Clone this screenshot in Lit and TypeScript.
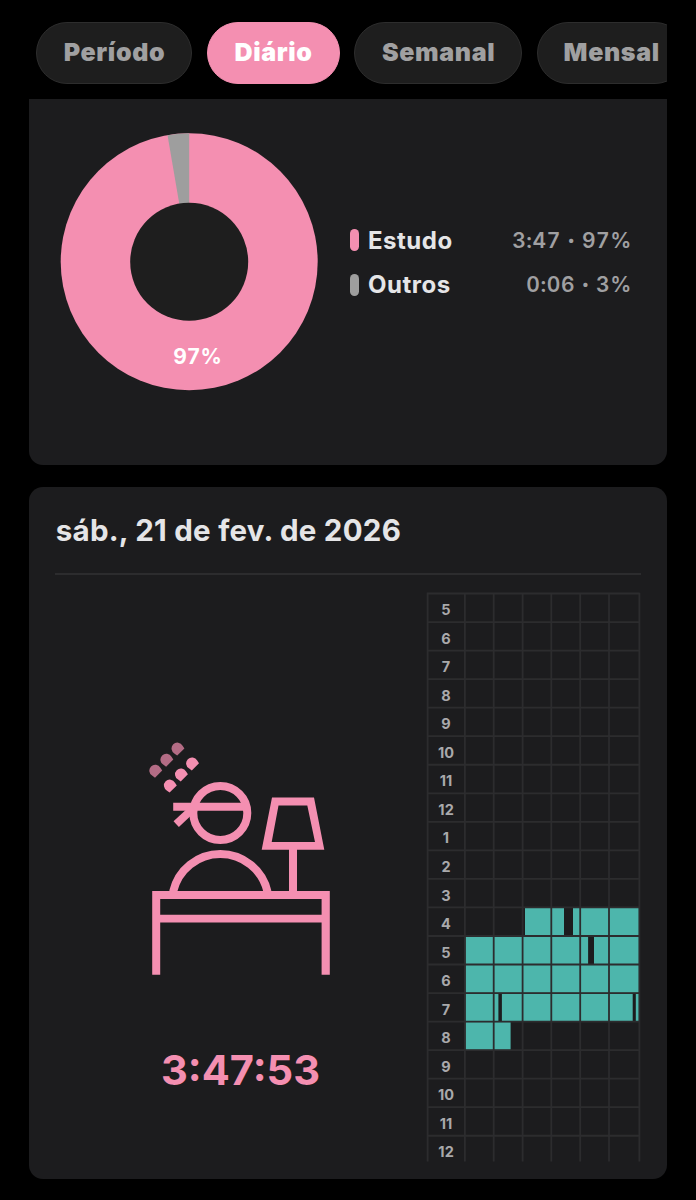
import { LitElement, html, svg, css } from "lit";
import { customElement, property } from "lit/decorators.js";

const HOURS = [5, 6, 7, 8, 9, 10, 11, 12, 1, 2, 3, 4, 5, 6, 7, 8, 9, 10, 11, 12];
const COLS = [38.9, 67.7, 96.6, 125.3, 154.2, 183];
const RIGHT = 213.4;
const ROW = 28.54;

// Studied spans: row index, start x, end x inside the timetable.
const SPANS: [number, number, number][] = [
  [11, 99, 138], [11, 147, 212.9],
  [12, 39.5, 162.1], [12, 168, 212.9],
  [13, 39.5, 212.9],
  [14, 39.5, 72.4], [14, 75.9, 206.7], [14, 209.8, 212.9],
  [15, 39.5, 84.6],
];

@customElement("tab-pill")
class TabPill extends LitElement {
  @property() label = "";
  @property({ type: Boolean, reflect: true }) active = false;
  static styles = css`
    :host { display: flex; flex: none; align-items: center; justify-content: center; box-sizing: border-box;
      height: 62px; border-radius: 31px; border: 1.5px solid #2d2d2d; background: #1e1e1e; color: #a0a0a1;
      font-weight: 900; font-size: 25px; letter-spacing: 0.65px; padding: 0 0 1.5px 1px; }
    :host([active]) { background: #f48fb1; border-color: #f48fb1; color: #fff; }
  `;
  render() { return html`${this.label}`; }
}

@customElement("donut-chart")
class DonutChart extends LitElement {
  static styles = css`
    :host { display: block; width: 259px; height: 258px; flex: none; }
    svg { display: block; }
    .pct { fill: #fff; font-size: 21px; font-weight: 700; letter-spacing: 0.9px; }
  `;
  render() {
    const cx = 129.2;
    const a = (-9.7 * Math.PI) / 180;
    const x = cx + 128.5 * Math.sin(a);
    const y = 128.8 - 128.5 * Math.cos(a);
    return html`<svg width="259" height="258" viewBox="0 0 259 258">
      <circle cx=${cx} cy="128.8" r="128.5" fill="#f48fb1" />
      <path d="M${cx} 128.8L${x} ${y}A128.5 128.5 0 0 1 ${cx} .3Z" fill="#9e9e9e" />
      <circle cx=${cx} cy="128.8" r="59" fill="#1e1e1e" />
      <text class="pct" x="138.1" y="230.6" text-anchor="middle">97%</text>
    </svg>`;
  }
}

@customElement("sleeper-icon")
class SleeperIcon extends LitElement {
  static styles = css`
    :host { display: block; width: 186px; height: 238px; }
    svg { display: block; }
  `;
  render() {
    const drop = (x: number, y: number, o: number) => svg`
      <path transform="translate(${x} ${y})" opacity=${o} d="M0 .4L7.2 -6.8L5.4 -9.5A5.9 5.9 0 1 0 -2.6 -1.5Z" />`;
    return html`<svg width="186" height="238" viewBox="148 739 186 238" fill="#f48fb1">
      ${drop(177.2, 755.2, 0.7)}${drop(166.1, 766.3, 0.7)}${drop(155, 777.3, 0.7)}
      ${drop(191.8, 770, 1)}${drop(180.7, 781.1, 1)}${drop(169.6, 792.2, 1)}
      <circle cx="220.3" cy="813" r="27" fill="none" stroke="#f48fb1" stroke-width="8" />
      <path d="M173.2 802.8H246V810.8H173.2Z" />
      <path d="M193 808.5L176.2 824.2" fill="none" stroke="#f48fb1" stroke-width="7.8" />
      <path fill-rule="evenodd" d="M272 797.5H314L324.3 849.7H261.7ZM278.5 805.4L271.7 842H315L307.3 805.4Z" />
      <path d="M289 849H297V892H289Z" />
      <path d="M173.1 891.7A48.4 48.4 0 0 1 267.5 891.7" fill="none" stroke="#f48fb1" stroke-width="8" />
      <path fill-rule="evenodd" d="M152.2 891H329.8V974.8H321.6V922.6H160.2V974.8H152.2ZM160.2 899.1V914.7H321.6V899.1Z" />
    </svg>`;
  }
}

@customElement("time-grid")
class TimeGrid extends LitElement {
  static styles = css`
    :host { display: block; width: 215px; height: 570px; flex: none; }
    svg { display: block; }
    .line { stroke: #2c2c2e; stroke-width: 1.8; fill: none; }
    .span { fill: #4db6ac; }
    .hour { fill: #a9a9ab; font-size: 14.5px; font-weight: 700; letter-spacing: 0.2px; }
  `;
  render() {
    const verticals = COLS.map((x) => `M${x} 1.5V569.4`).join("");
    const horizontals = HOURS.map((_, i) => `M.7 ${1.5 + i * ROW}H${RIGHT}`).join("");
    return html`<svg width="215" height="570" viewBox="0 0 215 570">
      ${SPANS.map(([r, a, b]) => svg`<rect class="span" x=${a} y=${2 + r * ROW} width=${b - a} height=${ROW - 0.8} />`)}
      <path class="line" d="M1.6 .7V569.4M${RIGHT} .7V569.4${verticals}${horizontals}" />
      ${HOURS.map((h, i) => svg`<text class="hour" x="20.1" y=${23.1 + i * ROW} text-anchor="middle">${h}</text>`)}
    </svg>`;
  }
}

@customElement("app-root")
class AppRoot extends LitElement {
  static styles = css`
    :host { display: block; box-sizing: border-box; height: 1200px; overflow: hidden; background: #000;
      padding: 22px 29px 0; font-family: Inter, sans-serif; color: #e5e5e7; }
    .tabs { display: flex; gap: 14.5px; padding-left: 7px; overflow: hidden; height: 62px; }
    .t1 { width: 156px; } .t2 { width: 133px; } .t3 { width: 168.2px; } .t4 { width: 149px; }
    .card { background: #1c1c1e; box-sizing: border-box; }
    .summary { margin-top: 15px; height: 366px; border-radius: 0 0 14px 14px; display: flex; padding: 34px 35px 0 31px; }
    .legend { flex: 1; margin: 89px 0 0 30.5px; display: flex; flex-direction: column; gap: 8px; }
    .row { display: flex; align-items: center; height: 36.5px; }
    .chip { width: 9px; height: 22px; border-radius: 4.5px; background: #f48fb1; margin-right: 9.5px; }
    .grey { background: #9e9e9e; }
    .name { font-size: 24px; font-weight: 650; letter-spacing: 0.5px; flex: 1; }
    .value { font-size: 21px; font-weight: 600; letter-spacing: 0.6px; color: #a0a0a2; font-variant-numeric: tabular-nums; }
    .dot { font-weight: 900; }
    .day { margin-top: 22px; height: 691.5px; border-radius: 14px; padding: 0 26px; }
    .date { height: 86px; box-sizing: border-box; font-size: 29.5px; font-weight: 680; line-height: 86px;
      letter-spacing: 0.24px; white-space: nowrap; padding-left: 0.8px; }
    .rule { height: 1.5px; background: #2c2c2e; }
    .body { display: flex; padding-top: 17px; }
    .left { flex: 1; display: flex; flex-direction: column; align-items: center; padding-top: 147px; }
    .timer { margin-top: 68px; font-size: 41.6px; font-weight: 680; line-height: 50px; color: #f48fb1; }
  `;
  render() {
    const entry = (name: string, time: string, share: string, chip = "") => html`
      <div class="row"><span class="chip ${chip}"></span><span class="name">${name}</span
        ><span class="value">${time} <span class="dot">·</span> ${share}</span></div>`;
    return html`
      <nav class="tabs">
        <tab-pill class="t1" label="Período"></tab-pill>
        <tab-pill class="t2" label="Diário" active></tab-pill>
        <tab-pill class="t3" label="Semanal"></tab-pill>
        <tab-pill class="t4" label="Mensal"></tab-pill>
      </nav>
      <section class="card summary">
        <donut-chart></donut-chart>
        <div class="legend">
          ${entry("Estudo", "3:47", "97%")}
          ${entry("Outros", "0:06", "3%", "grey")}
        </div>
      </section>
      <section class="card day">
        <div class="date">sáb., 21 de fev. de 2026</div>
        <div class="rule"></div>
        <div class="body">
          <div class="left">
            <sleeper-icon></sleeper-icon>
            <div class="timer">3:47:53</div>
          </div>
          <time-grid></time-grid>
        </div>
      </section>`;
  }
}
